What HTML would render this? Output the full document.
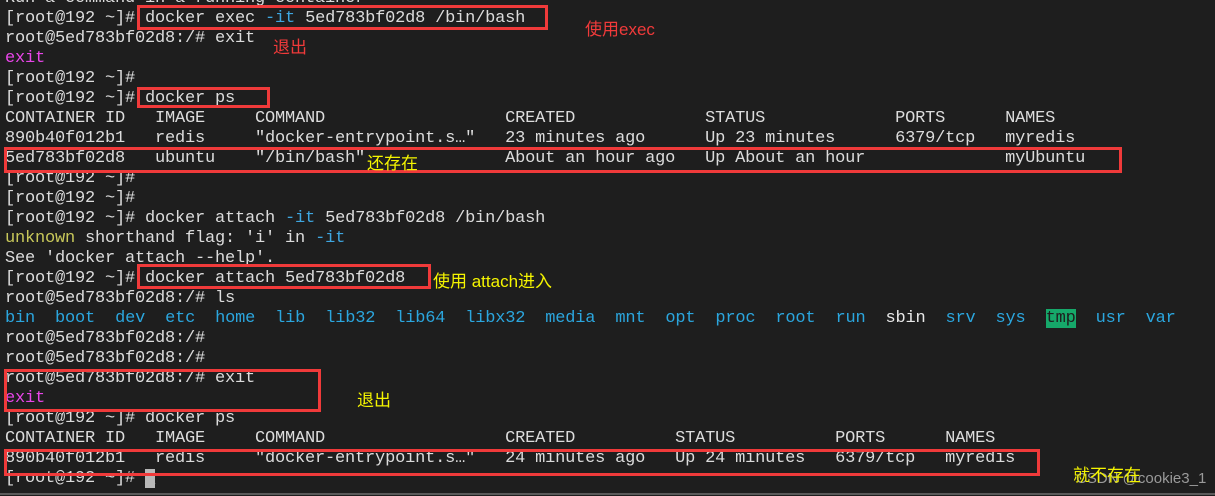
<!DOCTYPE html>
<html><head><meta charset="utf-8"><style>
html,body{margin:0;padding:0;background:#1e1e1e;width:1215px;height:496px;overflow:hidden;position:relative}
pre{position:absolute;left:5px;top:-11px;margin:0;font-family:"Liberation Mono","DejaVu Sans Mono",monospace;font-size:17px;letter-spacing:-0.2px;line-height:20px;color:#dcdcdc}
.c{color:#3ea6e0}.m{color:#e845e8}.y{color:#c8c85a}.b{color:#2ba6de}.w{color:#e8e8e8}
.t{background:#16a86a;color:#1e1e1e}
.cur{background:#b8b8b8;color:#b8b8b8}
.box{position:absolute;border:3px solid #f03a3a;box-sizing:border-box}
.a{position:absolute;font-family:"Liberation Sans","Noto Sans CJK SC",sans-serif;font-size:17px;line-height:20px;white-space:nowrap}
.r{color:#f03a3a}.yl{color:#f5f500}
.hr{position:absolute;left:0;top:493px;width:1215px;height:2px;background:#5a5a5a}
</style></head><body>
<pre>Run a command in a running container
[root@192 ~]# docker exec <span class="c">-it</span> 5ed783bf02d8 /bin/bash
root@5ed783bf02d8:/# exit
<span class="m">exit</span>
[root@192 ~]#
[root@192 ~]# docker ps
CONTAINER ID   IMAGE     COMMAND                  CREATED             STATUS             PORTS      NAMES
890b40f012b1   redis     "docker-entrypoint.s…"   23 minutes ago      Up 23 minutes      6379/tcp   myredis
5ed783bf02d8   ubuntu    "/bin/bash"              About an hour ago   Up About an hour              myUbuntu
[root@192 ~]#
[root@192 ~]#
[root@192 ~]# docker attach <span class="c">-it</span> 5ed783bf02d8 /bin/bash
<span class="y">unknown</span> shorthand flag: 'i' in <span class="c">-it</span>
See 'docker attach --help'.
[root@192 ~]# docker attach 5ed783bf02d8
root@5ed783bf02d8:/# ls
<span class="b">bin</span>  <span class="b">boot</span>  <span class="b">dev</span>  <span class="b">etc</span>  <span class="b">home</span>  <span class="b">lib</span>  <span class="b">lib32</span>  <span class="b">lib64</span>  <span class="b">libx32</span>  <span class="b">media</span>  <span class="b">mnt</span>  <span class="b">opt</span>  <span class="b">proc</span>  <span class="b">root</span>  <span class="b">run</span>  <span class="w">sbin</span>  <span class="b">srv</span>  <span class="b">sys</span>  <span class="t">tmp</span>  <span class="b">usr</span>  <span class="b">var</span>
root@5ed783bf02d8:/#
root@5ed783bf02d8:/#
root@5ed783bf02d8:/# exit
<span class="m">exit</span>
[root@192 ~]# docker ps
CONTAINER ID   IMAGE     COMMAND                  CREATED          STATUS          PORTS      NAMES
890b40f012b1   redis     "docker-entrypoint.s…"   24 minutes ago   Up 24 minutes   6379/tcp   myredis
[root@192 ~]# <span class="cur">_</span></pre>
<div class="box" style="left:137px;top:5px;width:411px;height:25px"></div>
<div class="box" style="left:137px;top:87px;width:133px;height:21px"></div>
<div class="box" style="left:4px;top:147px;width:1118px;height:26px"></div>
<div class="box" style="left:137px;top:264px;width:294px;height:25px"></div>
<div class="box" style="left:4px;top:369px;width:317px;height:43px"></div>
<div class="box" style="left:4px;top:449px;width:1036px;height:27px"></div>
<div class="a r" style="left:585px;top:20px">使用exec</div>
<div class="a r" style="left:273px;top:38px">退出</div>
<div class="a yl" style="left:367px;top:154px">还存在</div>
<div class="a yl" style="left:433px;top:272px">使用 attach进入</div>
<div class="a yl" style="left:357px;top:391px">退出</div>
<div class="a" style="left:1076px;top:469px;color:#9a9a9a;font-size:15px">CSDN @cookie3_1</div>
<div class="a yl" style="left:1073px;top:466px">就不存在</div>
<div class="hr"></div>
</body></html>
